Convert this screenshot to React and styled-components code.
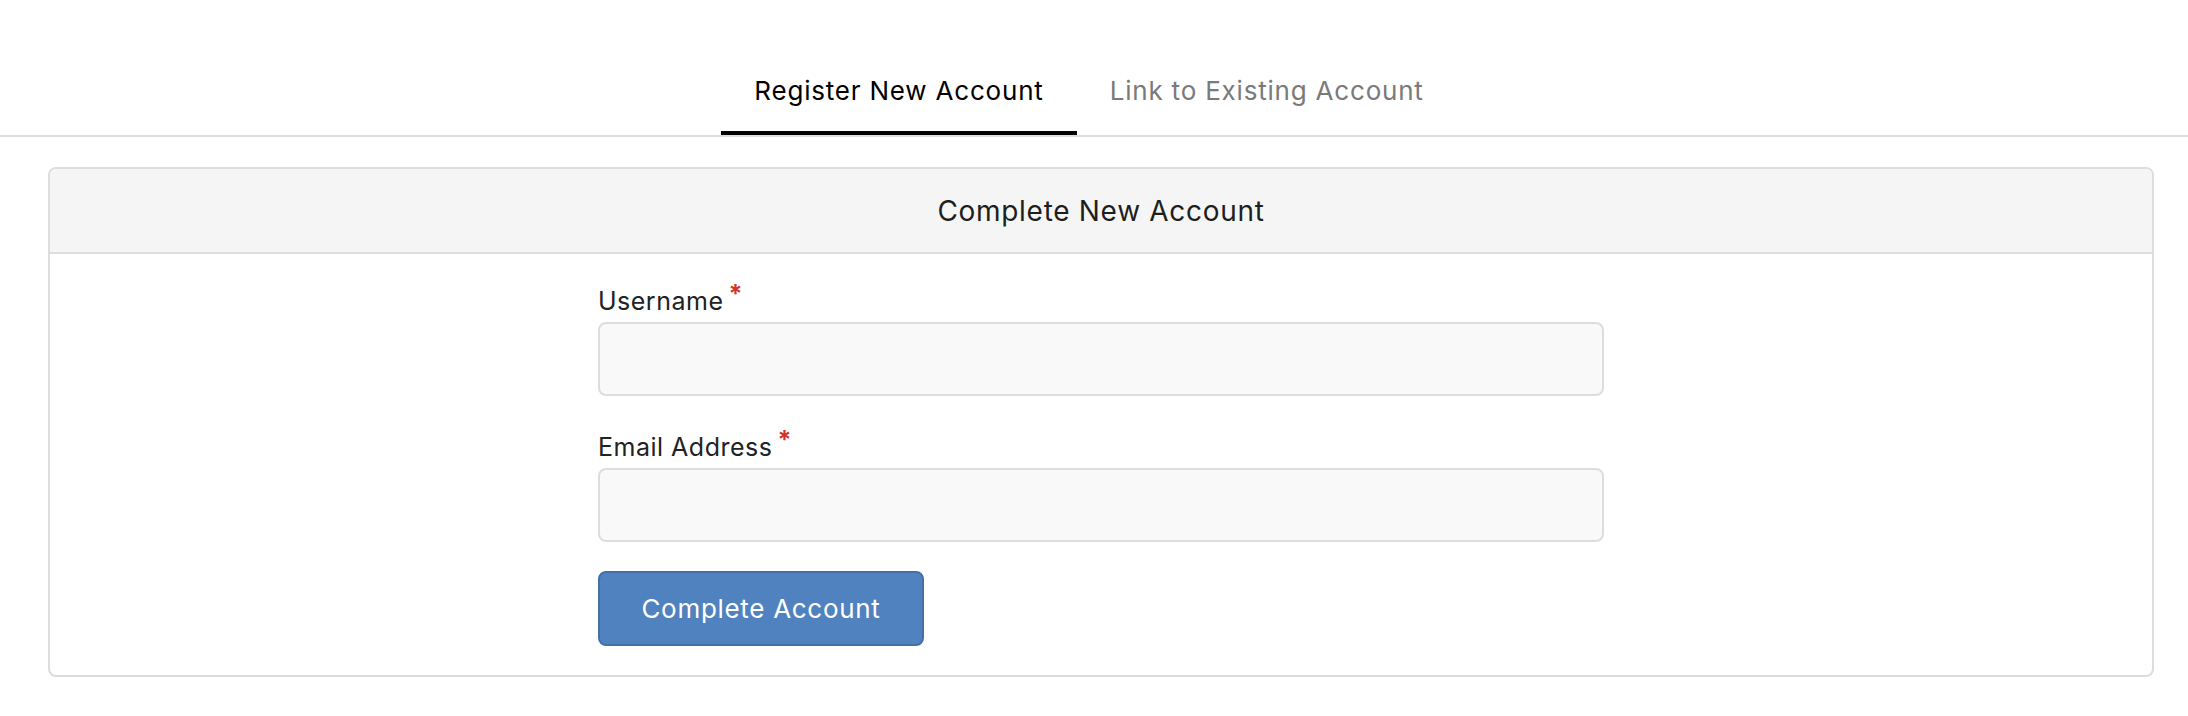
import styled, { createGlobalStyle } from "styled-components";

const GlobalStyle = createGlobalStyle`
  html, body {
    margin: 0;
    padding: 0;
    background: #ffffff;
  }
  body {
    font-family: Inter, "Liberation Sans", sans-serif;
    color: #222222;
  }
`;

const TabBar = styled.nav`
  display: flex;
  justify-content: center;
  padding-right: 10px;
  margin-top: 51px;
  border-bottom: 2px solid #dddddd;
`;

const Tab = styled.div`
  padding: 24px 33px 24px;
  font-size: 26px;
  line-height: 32px;
  letter-spacing: 0.8px;
  color: ${props => props.active ? "#000000" : "#7a7a7a"};
  border-bottom: 4px solid ${props => props.active ? "#000000" : "transparent"};
  cursor: pointer;
`;

const Card = styled.section`
  margin: 30px 34px 0 48px;
  border: 2px solid #dddddd;
  border-radius: 8px;
  overflow: hidden;
`;

const CardHeader = styled.header`
  display: flex;
  align-items: center;
  justify-content: center;
  height: 83px;
  background: #f5f5f5;
  border-bottom: 2px solid #dddddd;
  font-size: 28px;
  letter-spacing: 0.7px;
  color: #1e1e1e;
`;

const CardBody = styled.div`
  display: flex;
  justify-content: center;
  padding: 25px 0 29px;
`;

const Form = styled.form`
  width: 1006px;
  display: flex;
  flex-direction: column;
  gap: 29px;
`;

const Field = styled.div`
  display: flex;
  flex-direction: column;
  gap: 6px;
`;

const Label = styled.label`
  font-size: 25px;
  line-height: 30px;
  letter-spacing: 0.5px;
  color: #222222;
`;

const Required = styled.span`
  color: #d0342c;
  font-size: 25px;
  font-weight: 700;
  margin-left: 5px;
  vertical-align: 7px;
`;

const Input = styled.input`
  box-sizing: border-box;
  height: 74px;
  width: 100%;
  border: 2px solid #dddddd;
  border-radius: 8px;
  background: #f9f9f9;
  padding: 0 16px;
  font: inherit;
  font-size: 24px;
  outline: none;
`;

const Button = styled.button`
  box-sizing: border-box;
  align-self: flex-start;
  width: 326px;
  height: 75px;
  background: #5182c0;
  border: 2px solid #4470aa;
  border-radius: 8px;
  color: #ffffff;
  font-family: inherit;
  font-size: 26px;
  letter-spacing: 0.7px;
  cursor: pointer;
`;

export default function App() {
  return (
    <>
      <GlobalStyle />
      <TabBar>
        <Tab active>Register New Account</Tab>
        <Tab>Link to Existing Account</Tab>
      </TabBar>
      <Card>
        <CardHeader>Complete New Account</CardHeader>
        <CardBody>
          <Form onSubmit={e => e.preventDefault()}>
            <Field>
              <Label>Username<Required>*</Required></Label>
              <Input type="text" />
            </Field>
            <Field>
              <Label>Email Address<Required>*</Required></Label>
              <Input type="email" />
            </Field>
            <Button type="submit">Complete Account</Button>
          </Form>
        </CardBody>
      </Card>
    </>
  );
}
